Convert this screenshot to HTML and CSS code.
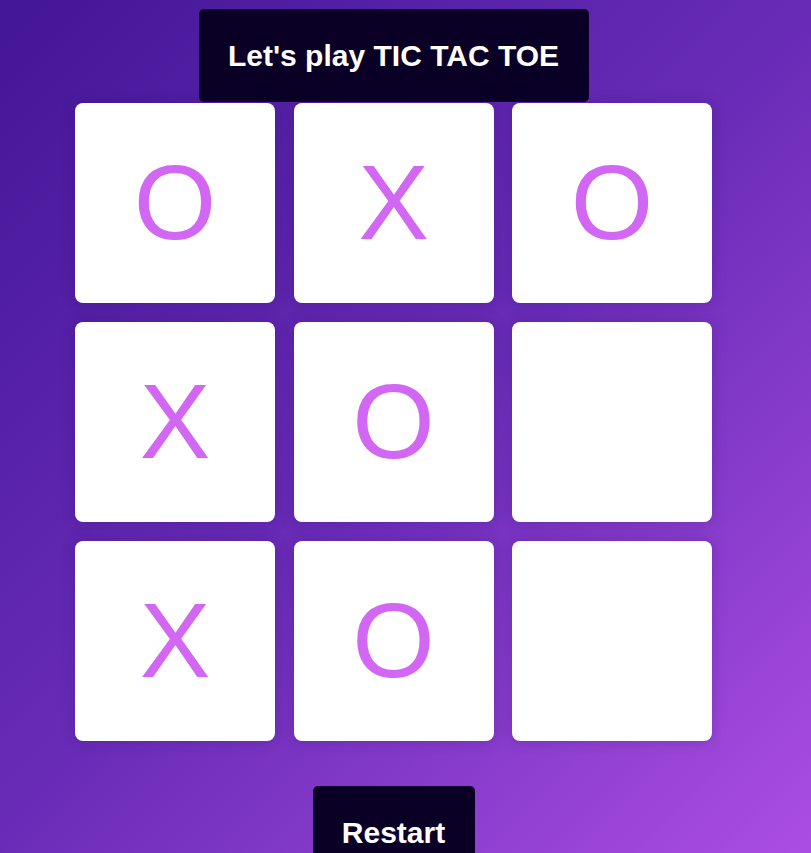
FILE: index.html
```html
<!DOCTYPE html>
<html lang="en">
<head>
<meta charset="utf-8">
<title>Tic Tac Toe</title>
<link rel="stylesheet" href="styles.css">
</head>
<body>
<main class="app">
  <h1 class="panel title">Let's play TIC TAC TOE</h1>
  <div class="board">
    <div class="cell">O</div>
    <div class="cell">X</div>
    <div class="cell">O</div>
    <div class="cell">X</div>
    <div class="cell">O</div>
    <div class="cell"></div>
    <div class="cell">X</div>
    <div class="cell">O</div>
    <div class="cell"></div>
  </div>
  <button class="panel restart" type="button">Restart</button>
</main>
</body>
</html>
```
FILE: styles.css
```css
html, body {
  margin: 0;
  padding: 0;
}
body {
  min-height: 853px;
  background: linear-gradient(135deg, #421696 0%, #6a2cb8 50%, #ad4fe3 100%);
  font-family: "Liberation Sans", Arial, sans-serif;
  overflow: hidden;
}
.app {
  width: 787px;
  display: flex;
  flex-direction: column;
  align-items: center;
  padding-top: 9px;
}
.panel {
  margin: 0;
  height: 93px;
  box-sizing: border-box;
  display: flex;
  align-items: center;
  justify-content: center;
  background: #0a0026;
  color: #ffffff;
  border: none;
  border-radius: 5px;
  font-family: "Liberation Sans", Arial, sans-serif;
  font-size: 30px;
  font-weight: bold;
  line-height: 1;
}
.title {
  width: 390px;
  padding-top: 1px;
}
.board {
  margin-top: 1px;
  display: grid;
  grid-template-columns: repeat(3, 200px);
  grid-auto-rows: 200px;
  column-gap: 18.5px;
  row-gap: 19px;
}
.cell {
  background: #ffffff;
  border-radius: 8px;
  display: flex;
  align-items: center;
  justify-content: center;
  box-sizing: border-box;
  padding-bottom: 3px;
  color: #d267f4;
  font-family: "Liberation Sans", Arial, sans-serif;
  font-size: 106px;
  line-height: 1;
  box-shadow: 0 0 14px rgba(40, 10, 100, 0.25);
}
.restart {
  margin-top: 45px;
  width: 162px;
  padding: 0;
  padding-top: 1px;
}
```
